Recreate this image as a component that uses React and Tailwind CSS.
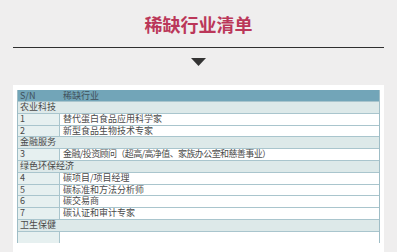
import React from "react";

const rows = [
  { cat: "农业科技" },
  { sn: "1", name: "替代蛋白食品应用科学家" },
  { sn: "2", name: "新型食品生物技术专家" },
  { cat: "金融服务" },
  {
    sn: "3",
    name: (
      <span className="tracking-[-0.6px]">
        金融/投资顾问（超高/高净值、家族办公室和慈善事业）
      </span>
    ),
  },
  { cat: "绿色环保经济" },
  { sn: "4", name: "碳项目/项目经理" },
  { sn: "5", name: "碳标准和方法分析师" },
  { sn: "6", name: "碳交易商" },
  { sn: "7", name: "碳认证和审计专家" },
  { cat: "卫生保健" },
  { sn: "", name: "" },
];

export default function App() {
  return (
    <div
      className="w-[397px] h-[252px] overflow-hidden bg-[#efeeee] flex flex-col"
      style={{ fontFamily: '"Noto Sans CJK SC", "Noto Sans", sans-serif' }}
    >
      <div className="h-[47px] flex items-start justify-center pt-[11px]">
        <span className="text-[18px] leading-[26px] font-bold text-[#bb3759]">
          稀缺行业清单
        </span>
      </div>
      <div className="mx-[13px] h-px bg-[#2f2f2f]" />
      <div className="flex justify-center pt-[10px] h-[37px]">
        <svg width="15" height="8" viewBox="0 0 15 8">
          <polygon points="0,0 15,0 7.5,8" fill="#333333" />
        </svg>
      </div>
      <div className="mx-[13px] bg-white pt-[5px] px-[4px] flex-1">
        <div className="border-l border-r border-[#9fbdc6] text-[#4a4a4a]">
          <div className="flex h-[11px] bg-[#72a5b8] text-[#3f4f5a] leading-[11px] text-[9px]">
            <div className="w-[42px] pl-[2px]">S/N</div>
            <div className="flex-1 pl-[3px]">稀缺行业</div>
          </div>
          {rows.map((r, i) =>
            r.cat ? (
              <div
                key={i}
                className="h-[11.8px] bg-[#dde9e9] border-t border-[#a9c5cd] leading-[10.5px] pl-[2px] text-[9px] overflow-hidden"
              >
                {r.cat}
              </div>
            ) : (
              <div key={i} className="flex h-[11.8px] border-t border-[#a9c5cd] leading-[10.5px] text-[9px] overflow-hidden">
                <div className="w-[42px] bg-[#e6f0f0] pl-[2px] border-r border-[#a9c5cd]">{r.sn}</div>
                <div className="flex-1 bg-white pl-[3px] whitespace-nowrap">{r.name}</div>
              </div>
            )
          )}
        </div>
      </div>
    </div>
  );
}
